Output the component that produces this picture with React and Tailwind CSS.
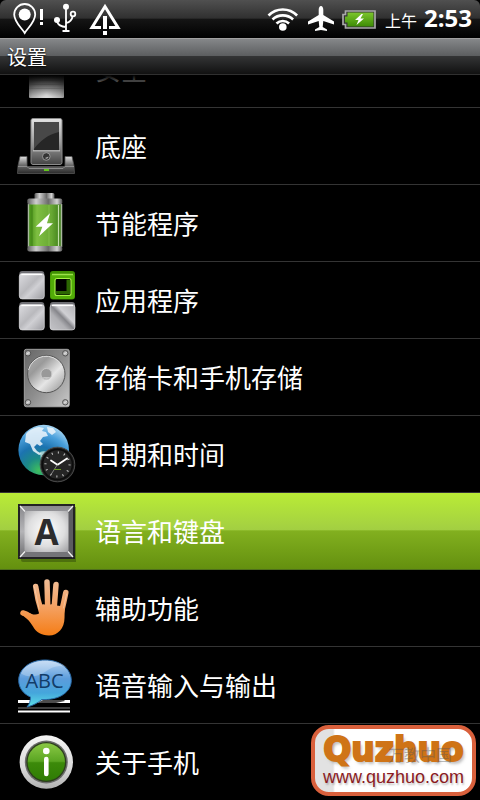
import React from 'react';

function Defs() {
  return (
    <svg width="0" height="0" className="absolute" aria-hidden="true">
      <defs>
        <linearGradient id="steel" x1="0" y1="0" x2="0" y2="1">
          <stop offset="0" stopColor="#e4e4e4" />
          <stop offset="0.5" stopColor="#a0a0a0" />
          <stop offset="1" stopColor="#444" />
        </linearGradient>
        <linearGradient id="chrome" x1="0" y1="0" x2="1" y2="0">
          <stop offset="0" stopColor="#5d5d5d" />
          <stop offset="0.25" stopColor="#cecece" />
          <stop offset="0.6" stopColor="#6b6b6b" />
          <stop offset="0.85" stopColor="#d2d2d2" />
          <stop offset="1" stopColor="#565656" />
        </linearGradient>
        <linearGradient id="dock" x1="0" y1="0" x2="0" y2="1">
          <stop offset="0" stopColor="#e0e0e0" />
          <stop offset="0.5" stopColor="#6c6c6c" />
          <stop offset="1" stopColor="#2a2a2a" />
        </linearGradient>
        <linearGradient id="cell" x1="0" y1="0" x2="1" y2="0">
          <stop offset="0" stopColor="#3f8a12" />
          <stop offset="0.25" stopColor="#7fbf42" />
          <stop offset="0.7" stopColor="#68a833" />
          <stop offset="1" stopColor="#3d7d18" />
        </linearGradient>
        <linearGradient id="tile" x1="0" y1="0" x2="1" y2="1">
          <stop offset="0" stopColor="#dcdce0" />
          <stop offset="0.45" stopColor="#b9b9bd" />
          <stop offset="0.6" stopColor="#d0d0d4" />
          <stop offset="1" stopColor="#9b9ba0" />
        </linearGradient>
        <linearGradient id="tileSheen" x1="0" y1="1" x2="1" y2="0">
          <stop offset="0" stopColor="#c4c4c8" />
          <stop offset="0.35" stopColor="#b0b0b4" />
          <stop offset="0.5" stopColor="#86868b" />
          <stop offset="0.62" stopColor="#d0d0d4" />
          <stop offset="1" stopColor="#b0b0b4" />
        </linearGradient>
        <linearGradient id="disk" x1="0" y1="0" x2="1" y2="1">
          <stop offset="0" stopColor="#666" />
          <stop offset="0.5" stopColor="#8d8d8d" />
          <stop offset="1" stopColor="#cacaca" />
        </linearGradient>
        <linearGradient id="platter" x1="0" y1="0" x2="1" y2="1">
          <stop offset="0" stopColor="#b2b2b2" />
          <stop offset="0.3" stopColor="#9a9a9a" />
          <stop offset="0.6" stopColor="#e6e6e6" />
          <stop offset="1" stopColor="#8d8d8d" />
        </linearGradient>
        <radialGradient id="globe" cx="0.4" cy="0.9" r="0.95">
          <stop offset="0" stopColor="#3fbf5e" />
          <stop offset="0.25" stopColor="#1c8a86" />
          <stop offset="0.5" stopColor="#1c73b0" />
          <stop offset="0.75" stopColor="#4aa0dc" />
          <stop offset="1" stopColor="#b9e0f7" />
        </radialGradient>
        <linearGradient id="key" x1="0" y1="0" x2="0" y2="1">
          <stop offset="0" stopColor="#8a8a8e" />
          <stop offset="0.5" stopColor="#b4b4b7" />
          <stop offset="1" stopColor="#6f6f72" />
        </linearGradient>
        <radialGradient id="keyFace" cx="0.5" cy="0.45" r="0.75">
          <stop offset="0" stopColor="#ffffff" />
          <stop offset="0.55" stopColor="#dededf" />
          <stop offset="1" stopColor="#9c9c9f" />
        </radialGradient>
        <linearGradient id="hand" gradientUnits="userSpaceOnUse" x1="0" y1="9" x2="0" y2="66">
          <stop offset="0" stopColor="#f0bd96" />
          <stop offset="0.45" stopColor="#f4a468" />
          <stop offset="1" stopColor="#f57c14" />
        </linearGradient>
        <linearGradient id="bubble" x1="0" y1="0" x2="0" y2="1">
          <stop offset="0" stopColor="#b8d4f2" />
          <stop offset="0.4" stopColor="#5b9cdc" />
          <stop offset="0.7" stopColor="#45a6dc" />
          <stop offset="1" stopColor="#5ce0e6" />
        </linearGradient>
        <linearGradient id="ring" x1="0" y1="0" x2="0" y2="1">
          <stop offset="0" stopColor="#f5f5f5" />
          <stop offset="0.6" stopColor="#dadada" />
          <stop offset="1" stopColor="#b2b2b2" />
        </linearGradient>
        <linearGradient id="info" x1="0" y1="0" x2="0" y2="1">
          <stop offset="0" stopColor="#8ac845" />
          <stop offset="0.48" stopColor="#5aa522" />
          <stop offset="0.52" stopColor="#3c8a0a" />
          <stop offset="1" stopColor="#2f7c04" />
        </linearGradient>
        <radialGradient id="lock" cx="0.5" cy="0.9" r="0.8">
          <stop offset="0" stopColor="#e6e6e6" />
          <stop offset="0.5" stopColor="#b0b0b0" />
          <stop offset="1" stopColor="#4b4b4b" />
        </radialGradient>
        <linearGradient id="chargeFill" x1="0" y1="0" x2="0" y2="1">
          <stop offset="0" stopColor="#7cc52c" />
          <stop offset="1" stopColor="#3d8c05" />
        </linearGradient>
      </defs>
    </svg>
  );
}

function Icon({ children }) {
  return (
    <svg width="60" height="76" viewBox="0 0 60 76" className="shrink-0" aria-hidden="true">
      {children}
    </svg>
  );
}

const SecurityIcon = () => (
  <Icon>
    <rect x="13" y="34" width="35" height="33" rx="1" fill="url(#lock)" />
    <path d="M13 49.5h35M13 53.5h35M13 57.5h35" stroke="#777" strokeOpacity="0.35" />
  </Icon>
);

const DockIcon = () => (
  <Icon>
    <path d="M1.500 65.500 2 58l2-9.500h7V58.500h38V48.500h7l2 9.500.5 7.500z" fill="url(#dock)" stroke="#555" strokeWidth="0.800" />
    <path d="M2 58.500h9l2 2h34l2-2h9" fill="none" stroke="#8d8d8d" />
    <rect x="15" y="10.500" width="31" height="46" rx="2" fill="url(#steel)" stroke="#8a8a8a" />
    <rect x="18" y="14" width="25" height="28.500" fill="#262626" />
    <path d="M18 14h25v10C31 27 24 33 18 41z" fill="#484848" />
    <path d="M17 42.800h27" stroke="#d0d0d0" />
    <circle cx="30.300" cy="48.500" r="3.800" fill="#343434" stroke="#a8a8a8" strokeWidth="0.800" />
    <path d="M29 50a2 2 0 0 0 3.500-1.500z" fill="#aaa" />
    <rect x="28" y="61" width="5" height="2" fill="#62c51c" />
  </Icon>
);

const BatteryIcon = () => (
  <Icon>
    <rect x="18.500" y="8" width="20" height="7" rx="1.500" fill="url(#chrome)" />
    <rect x="13" y="18" width="32" height="45" fill="url(#cell)" />
    <path d="M16 20v41" stroke="#2f700c" strokeOpacity="0.6" />
    <path d="M33 20v41" stroke="#a6dc6c" strokeOpacity="0.4" />
    <path d="M12.500 19v43M45.500 19v43" stroke="#a9b99e" strokeWidth="1.500" />
    <path d="M42.500 20v41" stroke="#c4dfac" strokeWidth="1.200" />
    <rect x="11.300" y="13.500" width="35" height="6" rx="2" fill="url(#chrome)" />
    <rect x="11.300" y="61" width="35" height="5.500" rx="2" fill="url(#chrome)" />
    <path d="M34 28.300 19.700 41.700h6.600L23 51.300 37 38.300h-6z" fill="#fff" />
  </Icon>
);

function Tile({ x, y, fill }) {
  return (
    <g>
      <rect x={x} y={y} width="25" height="28" rx="3" fill="#6f6f74" />
      <rect x={x} y={y + 2.5} width="25" height="25.500" rx="3" fill={fill} stroke="#e0e0e3" strokeWidth="0.600" />
      <path d={`M${x + 2} ${y + 3.5}h21`} stroke="#fff" strokeWidth="1.300" />
    </g>
  );
}

const AppsIcon = () => (
  <Icon>
    <Tile x={3.3} y={9} fill="url(#tile)" />
    <Tile x={3.3} y={40} fill="url(#tile)" />
    <Tile x={34} y={40} fill="url(#tileSheen)" />
    <rect x="34" y="9" width="25" height="28.500" rx="3" fill="#3f8f02" />
    <rect x="34.500" y="12" width="24" height="25" rx="3" fill="#52ac08" />
    <path d="M36 12.500h21" stroke="#9be04a" strokeWidth="1.500" />
    <rect x="39" y="16.500" width="16" height="17" rx="2" fill="#000" stroke="#a4f246" strokeWidth="1.200" />
    <path d="M40 29h10.500V17.500h3.500v15H40z" fill="#2c6702" />
  </Icon>
);

const StorageIcon = () => (
  <Icon>
    <rect x="8.300" y="10.300" width="45" height="57.500" rx="2" fill="url(#disk)" stroke="#b5b5b5" strokeWidth="0.800" />
    <circle cx="30.300" cy="35" r="18.700" fill="url(#platter)" stroke="#555" />
    <path d="M12.500 31a18 18 0 0 1 33-5" fill="none" stroke="#ddd" strokeWidth="1" />
    <circle cx="30.300" cy="35" r="5.500" fill="#999" stroke="#c8c8c8" />
    <path d="M26.500 38a5 5 0 0 0 8 0z" fill="#c5c5c5" />
    {[[12, 14.300], [49.300, 14.300], [12, 63.300], [49.300, 63.300]].map(([x, y]) => (
      <g key={`${x}-${y}`}>
        <circle cx={x} cy={y} r="2.700" fill="#bbb" stroke="#505050" />
        <path d={`M${x - 1.5} ${y + 1}l3-2`} stroke="#eee" strokeWidth="0.800" />
      </g>
    ))}
  </Icon>
);

const DateIcon = () => (
  <Icon>
    <circle cx="27.700" cy="34" r="25.300" fill="url(#globe)" />
    <path d="M10 18c3-4 8-6.500 13-7l5 1-2 3 4 1 2 4-5 1-3 4 3 3-3 2-3-2-3 3 3 4 5 3-3 1-6-4-3-7-5-2z" fill="#eef6fb" fillOpacity="0.85" />
    <path d="m31 11 6 1 3 4-4 3-4-3z" fill="#eef6fb" fillOpacity="0.85" />
    <path d="M24 36c4-2 10 0 12 4l-6 10-5-5z" fill="#d4efe8" fillOpacity="0.7" />
    <circle cx="41.500" cy="48.500" r="17.300" fill="#1c1c1c" stroke="#4d4d4d" />
    <circle cx="41.500" cy="48.500" r="15" fill="#252525" stroke="#0c0c0c" strokeWidth="1.500" />
    <circle cx="41.500" cy="48.500" r="12" fill="none" stroke="#c8c8c8" strokeWidth="2.200" strokeDasharray="1 5.283" />
    <path d="m41 48.500-6-4M42 48.500 51 42.500" stroke="#fff" strokeWidth="1.800" strokeLinecap="round" />
    <path d="M41.500 48.500 35 58.500" stroke="#aaa" strokeWidth="0.700" />
    <path d="M38 53.500h7" stroke="#6b9c22" />
  </Icon>
);

const KeyIcon = () => (
  <Icon>
    <rect x="5" y="14" width="57" height="55" rx="2" fill="#2f4a08" fillOpacity="0.5" />
    <rect x="2" y="11" width="57" height="55" fill="#222224" />
    <rect x="4" y="13" width="53" height="51" fill="url(#key)" />
    <path d="M57 13v51l-5-6V18z" fill="#5c5c60" />
    <path d="M4 64h53l-5-6H9z" fill="#747478" />
    <rect x="8.500" y="18" width="44" height="41" rx="2" fill="url(#keyFace)" />
    <path d="m4 13 5 5.500M57 13l-5 5.500M4 64l5-5.500M57 64l-5-5.500" stroke="#f1f1f1" strokeWidth="1.300" />
    <text x="30.500" y="52" textAnchor="middle" fontSize="35" fontWeight="700" fontFamily="'Open Sans', sans-serif" fill="#2c2c2e">A</text>
  </Icon>
);

const HandIcon = () => (
  <Icon>
    <g fill="none" stroke="url(#hand)" strokeWidth="5.500" strokeLinecap="round">
      <path d="M19.700 16.500Q21.500 30 25.500 42" />
      <path d="M31 12 31.800 40" />
      <path d="M40 14.500 38 40" />
      <path d="M49.800 22.500Q48 32 45 44" />
      <path d="M7 43Q13 44.500 22 53" />
    </g>
    <path
      d="M22.500 36Q26 33.500 29 34.500L34.500 34.500Q37 33 40.500 35.500 44 36 48.800 36.500L48.500 48C48.500 58 42 65.500 33 65.500 25 65.500 20 62 17 56.500 14 51.500 11.500 49 8 46.500L11 42C15 44.500 20 45.500 23 43.500 24 41.500 23.500 39 22.500 36z"
      fill="url(#hand)"
    />
    <path d="M18.500 17 23 39M50.500 24 47.500 38" stroke="#fbe0c8" strokeOpacity="0.5" strokeLinecap="round" />
  </Icon>
);

const VoiceIcon = () => (
  <Icon>
    <path d="M2 54.500h52" stroke="#fff" strokeWidth="3" />
    <path d="M2 61h52" stroke="#3f3f3f" strokeWidth="2" />
    <path d="M2 64.500h52" stroke="#fff" strokeWidth="2" />
    <path d="m13 60 14-7 20-1 2 2-18 4z" fill="#000" fillOpacity="0.7" />
    <path d="M29 13c14.500 0 26.300 8.500 26.300 20.300S43.500 52.500 29 52.500h-3c-4 3-8.500 6-15 7.500 2.500-3 3.500-6 3.500-10C7.500 47 2.700 41 2.700 33.300 2.700 21.500 14.500 13 29 13z" fill="url(#bubble)" stroke="#2a6aa8" />
    <path d="M29 25c8-6 16-8 23-3.500C47 15.500 38 14 29 14S9 17 5 26.500C12 31 22 30 29 25z" fill="#fff" fillOpacity="0.25" />
    <text x="28.500" y="41" textAnchor="middle" fontSize="20" fontFamily="'Open Sans', sans-serif" fill="#123c68">ABC</text>
  </Icon>
);

const InfoIcon = () => (
  <Icon>
    <circle cx="30.300" cy="38" r="26.700" fill="url(#ring)" />
    <circle cx="30.300" cy="38" r="21.500" fill="#6b6b6b" />
    <circle cx="30.300" cy="38" r="20" fill="#2c3f1c" />
    <circle cx="30.300" cy="38" r="18.700" fill="url(#info)" />
    <circle cx="30.300" cy="27" r="3.300" fill="#fff" />
    <path d="M30.300 35v15" stroke="#fff" strokeWidth="4.600" strokeLinecap="round" />
  </Icon>
);

const items = [
  { label: '安全', icon: SecurityIcon },
  { label: '底座', icon: DockIcon },
  { label: '节能程序', icon: BatteryIcon },
  { label: '应用程序', icon: AppsIcon },
  { label: '存储卡和手机存储', icon: StorageIcon },
  { label: '日期和时间', icon: DateIcon },
  { label: '语言和键盘', icon: KeyIcon, selected: true },
  { label: '辅助功能', icon: HandIcon },
  { label: '语音输入与输出', icon: VoiceIcon },
  { label: '关于手机', icon: InfoIcon },
];

function StatusBar() {
  return (
    <div className="flex h-[38px] shrink-0 items-center justify-between rounded-t-md bg-[linear-gradient(#505050_0%,#303030_48%,#151515_50%,#000_100%)] pl-3 pr-2">
      <div className="flex items-center gap-[10px]">
        <svg width="32" height="38" viewBox="12 0 32 38" aria-hidden="true">
          <path d="M24.700 33c-3-5-10.500-11-10.500-18.500a10.500 10.500 0 0 1 21 0C35.200 22 27.700 28 24.700 33z" fill="none" stroke="#fff" strokeWidth="1.800" />
          <circle cx="24.700" cy="14.500" r="6" fill="#fff" />
          <path d="M41.500 9v11M41.500 22v3" stroke="#fff" strokeWidth="3" />
        </svg>
        <svg width="24" height="38" viewBox="54 0 24 38" aria-hidden="true">
          <g fill="none" stroke="#fff" strokeWidth="1.800">
            <path d="M66 6v25M62.500 31h7M57 20c0 5 5 7 9 7M72.500 16c0 3-3 7-6.500 7" />
            <circle cx="73" cy="14" r="2.300" />
          </g>
          <circle cx="66" cy="6.800" r="3" fill="#fff" />
          <circle cx="57" cy="20" r="3" fill="#fff" />
        </svg>
        <svg width="34" height="38" viewBox="88 0 34 38" aria-hidden="true">
          <path d="M101 27.500h-9L105 6.500l13 21h-9" fill="none" stroke="#fff" strokeWidth="3" />
          <path d="M105 16v13M105 31v4" stroke="#fff" strokeWidth="4" />
        </svg>
      </div>
      <div className="flex items-center">
        <svg width="110" height="38" viewBox="268 0 110 38" aria-hidden="true">
          <g fill="none" stroke="#fff" strokeWidth="2.600">
            <path d="M269.500 15.500a20 20 0 0 1 28.600 0M273.500 19.500a15 15 0 0 1 20.600 0M277.500 23.500a9 9 0 0 1 12.600 0" />
          </g>
          <circle cx="283.800" cy="27" r="3.800" fill="#fff" />
          <path d="M322 6c1.500 0 2.300 1.800 2.300 4v5l10.700 6.500v3L324.300 21l-.6 6 4.300 2.500V31l-6-1-6 1v-1.500l4.300-2.500-.6-6L309 24.500v-3L319.700 15v-5c0-2.200.8-4 2.300-4z" fill="#fff" />
          <path d="M346.500 11h29.500v17h-29.500v-3.500h-2.500v-10h2.500z" fill="#333" stroke="#a9a9a9" strokeWidth="1.700" />
          <path d="M348.500 12.500h26v14h-26v-4H346v-6h2.500z" fill="url(#chargeFill)" />
          <path d="m362.500 14-6.500 6h3.500l-2 5 7.500-6.500h-3.500l2.500-4.500z" fill="#fff" />
        </svg>
        <time className="ml-2 flex items-baseline gap-[7px] leading-[38px]">
          <span className="text-[16px]">上午</span>
          <span className="font-['Open_Sans',sans-serif] text-[24px] font-bold">2:53</span>
        </time>
      </div>
    </div>
  );
}

function SettingRow({ label, icon: Glyph, selected }) {
  return (
    <li
      className={
        selected
          ? 'border-b border-[#4f6f1c] bg-[linear-gradient(#b9ec36_0%,#a3cf42_48%,#82b01f_50%,#64900f_100%)]'
          : 'border-b border-[#343434]'
      }
    >
      <button type="button" className="flex h-[76px] w-full items-center gap-[19px] px-4 text-left">
        <Glyph />
        <span className="text-[26px] leading-[36px]">{label}</span>
      </button>
    </li>
  );
}

function SiteBadge() {
  return (
    <a
      href="#quzhuo"
      className="absolute bottom-1 right-1 flex h-[71px] w-[165px] flex-col items-center justify-center overflow-hidden rounded-[18px] border-4 border-[#d9603c] bg-[linear-gradient(90deg,#e2e2e2_0,#e2e2e2_18px,#fff_20px)]"
    >
      <span className="font-['DejaVu_Sans',sans-serif] text-[33px] font-bold leading-[32px] text-[#cf7417] [-webkit-text-stroke:2px_#cf7417] [text-shadow:2px_3px_3px_#8888]">Quzhuo</span>
      <span className="font-['Liberation_Sans',Arial,sans-serif] text-[18px] leading-[22px] text-[#8b1a22] [text-shadow:1px_2px_2px_#8888]">www.quzhuo.com</span>
      <span className="absolute right-[20px] top-[15px] text-[16px] leading-[20px] text-[#555] opacity-40">万教中国</span>
    </a>
  );
}

export default function App() {
  return (
    <div className="relative flex h-screen w-full flex-col overflow-hidden bg-black font-['Noto_Sans_CJK_SC',sans-serif] text-white">
      <Defs />
      <StatusBar />
      <header className="h-[37px] shrink-0 border-b border-t border-b-[#303030] border-t-[#a0a0a0] bg-[linear-gradient(#858789_0%,#5c5e60_48%,#333435_50%,#111_100%)] px-[7px]">
        <h1 className="text-[20px] leading-[35px] [text-shadow:0_1px_2px_#000]">设置</h1>
      </header>
      <main className="relative min-h-0 flex-1 overflow-hidden">
        <ul className="-mt-[44px]">
          {items.map((item) => (
            <SettingRow key={item.label} {...item} />
          ))}
        </ul>
        <div className="pointer-events-none absolute inset-x-0 top-0 h-[22px] bg-gradient-to-b from-black to-transparent" />
      </main>
      <SiteBadge />
    </div>
  );
}
